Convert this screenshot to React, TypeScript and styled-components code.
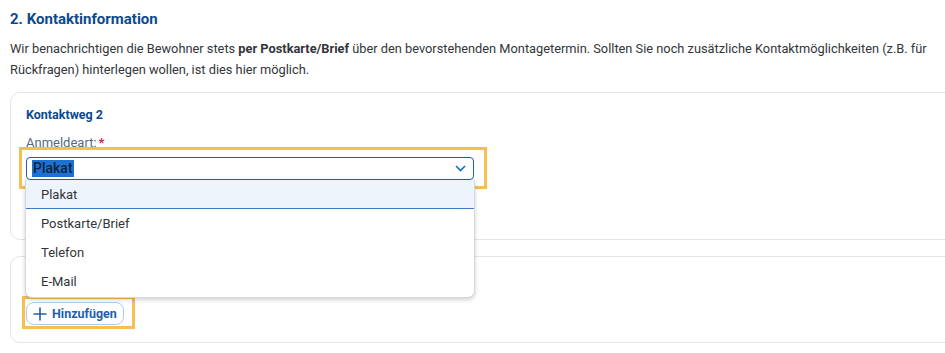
import React from "react";
import styled, { createGlobalStyle } from "styled-components";

const colors = {
  title: "#0b4a8e",
  text: "#32363a",
  label: "#556b82",
  required: "#d0244f",
  border: "#e2e5ea",
  field: "#1e5fae",
  accent: "#0a6ed1",
  mark: "#f7bf4f",
};

const options = ["Plakat", "Postkarte/Brief", "Telefon", "E-Mail"];

export default function App() {
  return (
    <>
      <GlobalStyle />
      <Page>
        <Title>2. Kontaktinformation</Title>
        <Intro>
          Wir benachrichtigen die Bewohner stets <b>per Postkarte/Brief</b> über den
          bevorstehenden Montagetermin. Sollten Sie noch zusätzliche
          Kontaktmöglichkeiten (z.B. für Rückfragen) hinterlegen wollen, ist dies
          hier möglich.
        </Intro>

        <Card $height={148}>
          <CardTitle>Kontaktweg 2</CardTitle>
          <Label>
            Anmeldeart:<Required>*</Required>
          </Label>
          <Marked>
            <Highlight $t={10} $r={13} $b={9} $l={7} />
            <Select>
              <SelectedText>Plakat</SelectedText>
              <svg width="11" height="7" viewBox="0 0 11 7">
                <path d="M1 1 L5.5 5.5 L10 1" fill="none" stroke={colors.accent} strokeWidth="1.6" />
              </svg>
            </Select>
            <Dropdown>
              {options.map((o, i) => (
                <Option key={o} $active={i === 0}>{o}</Option>
              ))}
            </Dropdown>
          </Marked>
        </Card>

        <Card $height={87} $top={45}>
          <Marked $inline>
            <Highlight $t={6} $r={11} $b={4} $l={4} />
            <AddButton>
              <svg width="14" height="14" viewBox="0 0 14 14">
                <path d="M7 0.5 V13.5 M0.5 7 H13.5" stroke={colors.field} strokeWidth="1.6" />
              </svg>
              Hinzufügen
            </AddButton>
          </Marked>
        </Card>
      </Page>
    </>
  );
}

// --- styled components ---
const GlobalStyle = createGlobalStyle`
  body {
    margin: 0;
    background: #fff;
    font-family: Roboto, "Liberation Sans", sans-serif;
    color: ${colors.text};
  }
`;

const Page = styled.div`
  width: 945px;
  height: 353px;
  overflow: hidden;
  padding: 9px 0 0 10px;
  box-sizing: border-box;
`;

const Title = styled.h2`
  margin: 0;
  font-size: 15px;
  line-height: 21px;
  font-weight: 700;
  color: ${colors.title};
`;

const Intro = styled.p`
  margin: 8px 0 0;
  width: 932px;
  font-size: 12.8px;
  line-height: 21px;
  color: ${colors.text};

  b {
    font-weight: 700;
  }
`;

const Card = styled.section<{ $height: number; $top?: number }>`
  box-sizing: border-box;
  width: 960px;
  height: ${p => p.$height}px;
  margin-top: 12px;
  padding: ${p => p.$top ?? 14}px 15px 0;
  border: 1px solid ${colors.border};
  border-radius: 10px;

  & + & {
    margin-top: 16px;
  }
`;

const CardTitle = styled.h3`
  margin: 0;
  font-size: 12.5px;
  line-height: 16px;
  font-weight: 700;
  color: ${colors.title};
`;

const Label = styled.div`
  margin-top: 12px;
  font-size: 13px;
  line-height: 16px;
  color: ${colors.label};
`;

const Required = styled.span`
  color: ${colors.required};
  font-weight: 700;
  margin-left: 2px;
`;

const Marked = styled.div<{ $inline?: boolean }>`
  position: relative;
  display: ${p => (p.$inline ? "inline-block" : "block")};
  width: ${p => (p.$inline ? "auto" : "448px")};
  margin-top: ${p => (p.$inline ? 0 : 6)}px;
`;

const Highlight = styled.div<{ $t: number; $r: number; $b: number; $l: number }>`
  position: absolute;
  top: -${p => p.$t}px;
  right: -${p => p.$r}px;
  bottom: -${p => p.$b}px;
  left: -${p => p.$l}px;
  border: 3px solid ${colors.mark};
  pointer-events: none;
`;

const Select = styled.div`
  box-sizing: border-box;
  height: 23px;
  display: flex;
  align-items: center;
  justify-content: space-between;
  padding: 0 7px 0 5px;
  border: 1px solid ${colors.field};
  border-radius: 4px;
  background: #fff;
`;

const SelectedText = styled.span`
  background: #1b72d3;
  color: #0d2440;
  font-size: 14px;
  line-height: 17px;
  font-weight: 500;
  padding: 0 1px;
`;

const Dropdown = styled.ul`
  position: absolute;
  z-index: 5;
  top: 23px;
  left: -1px;
  width: 450px;
  margin: 0;
  padding: 0;
  list-style: none;
  box-sizing: border-box;
  background: #fff;
  border: 1px solid #d5d8dc;
  border-top: none;
  border-radius: 0 0 7px 7px;
  box-shadow: 0 2px 4px rgba(0, 0, 0, 0.18);
`;

const Option = styled.li<{ $active: boolean }>`
  box-sizing: border-box;
  height: 29px;
  line-height: 30px;
  padding-left: 15px;
  font-size: 13px;
  color: ${colors.text};
  background: ${p => (p.$active ? "#eef4fc" : "transparent")};
  border-bottom: 1px solid ${p => (p.$active ? "#3f7cc6" : "transparent")};

  &:last-child {
    height: 30px;
  }
`;

const AddButton = styled.button`
  display: flex;
  align-items: center;
  gap: 5px;
  height: 23px;
  padding: 0 6px;
  box-sizing: border-box;
  border: 1px solid #a9cdf2;
  border-radius: 8px;
  background: #fff;
  font-family: inherit;
  font-size: 12.5px;
  font-weight: 700;
  color: ${colors.field};
  cursor: pointer;
`;
